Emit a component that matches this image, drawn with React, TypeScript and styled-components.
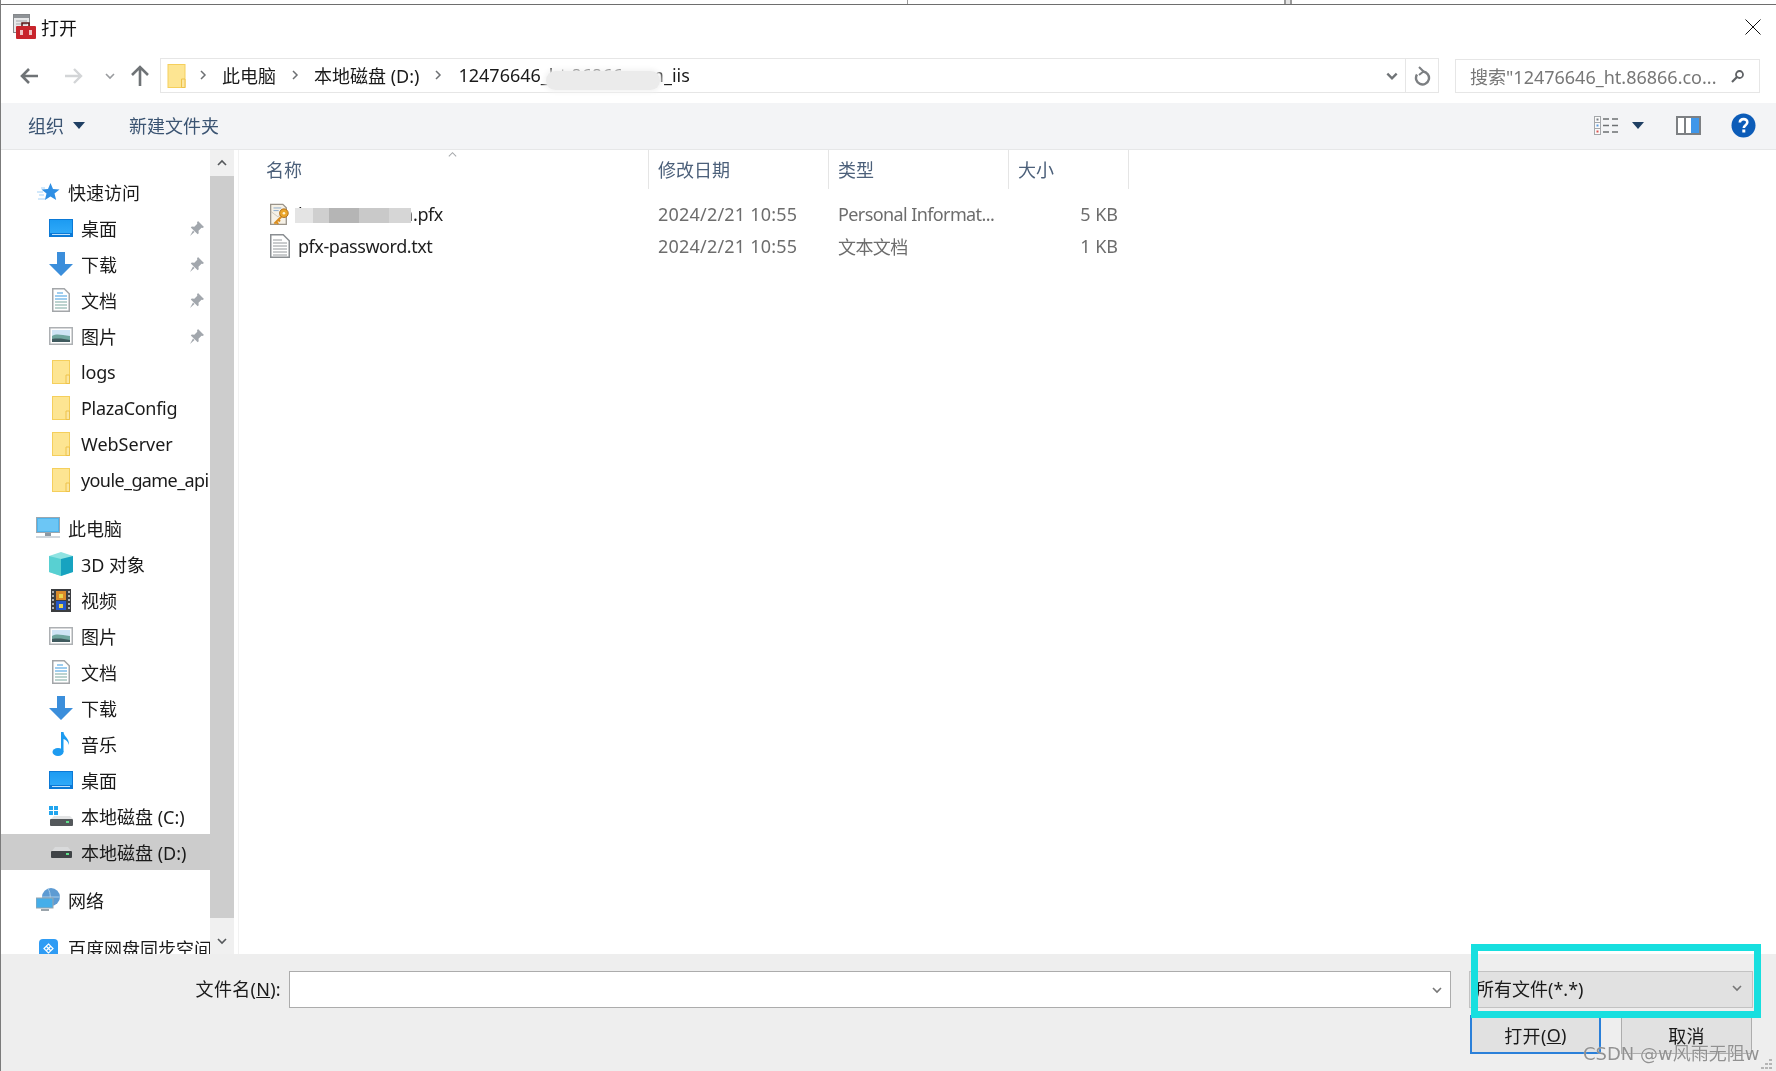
import React from 'react'
import styled, { createGlobalStyle } from 'styled-components'

const GlobalStyle = createGlobalStyle`
  html, body {
    margin: 0;
    padding: 0;
    background: #fff;
  }
  * { box-sizing: border-box; }
`

const Back = ({ color = '#6f7376' }: { color?: string }) => (
  <svg width="20" height="20" viewBox="0 0 20 20" fill="none" stroke={color} strokeWidth="2.6">
    <path d="M19 10H3M10 3l-7 7 7 7" />
  </svg>
)
const Forward = () => (
  <svg width="20" height="20" viewBox="0 0 20 20" fill="none" stroke="#d3d5d7" strokeWidth="2.4">
    <path d="M1 10h16M10 3l7 7-7 7" />
  </svg>
)
const Up = () => (
  <svg width="20" height="22" viewBox="0 0 20 22" fill="none" stroke="#6f7376" strokeWidth="2.6">
    <path d="M10 21V3M2 10l8-8 8 8" />
  </svg>
)
const Chevron = ({ size = 12, color = '#8a8d90', width = 1.6 }: { size?: number; color?: string; width?: number }) => (
  <svg width={size} height={size} viewBox="0 0 12 12" fill="none" stroke={color} strokeWidth={width}>
    <path d="M2 4l4 4 4-4" />
  </svg>
)
const Crumb = () => (
  <svg width="8" height="12" viewBox="0 0 8 12" fill="none" stroke="#6d7073" strokeWidth="1.5">
    <path d="M2 2l4 4-4 4" />
  </svg>
)
const Caret = ({ color = '#1f3f63' }: { color?: string }) => (
  <svg width="12" height="7" viewBox="0 0 12 7"><path d="M0 0h12L6 7z" fill={color} /></svg>
)
const Refresh = () => (
  <svg width="18" height="20" viewBox="0 0 18 20" fill="none" stroke="#7c7f82" strokeWidth="2.4">
    <path d="M10 5.500a6.500 6.500 0 1 1-6 3" />
    <path d="M6 1l4.500 4.500L6 9" strokeWidth="2" />
  </svg>
)
const Lens = () => (
  <svg width="14" height="14" viewBox="0 0 14 14" fill="none" stroke="#5f6265">
    <circle cx="8.500" cy="5.500" r="3.500" strokeWidth="1.800" />
    <path d="M6 8l-5 5" strokeWidth="2.200" />
  </svg>
)
const CloseX = () => (
  <svg width="16" height="16" viewBox="0 0 16 16" stroke="#111" strokeWidth="1" fill="none">
    <path d="M.5.5l15 15M15.500.5l-15 15" />
  </svg>
)
const ViewIcon = () => (
  <svg width="25" height="19" viewBox="0 0 25 19">
    <rect x=".5" y=".5" width="6" height="18" fill="#fafafa" stroke="#a4a7aa" />
    <path d="M.5 6.500h6M.5 12.500h6" stroke="#a4a7aa" />
    <rect x="2.500" y="2.500" width="2" height="2" fill="#7a7f85" />
    <rect x="2.500" y="8.500" width="2" height="2" fill="#5d9ce0" />
    <rect x="2.500" y="14.500" width="2" height="2" fill="#d9534f" />
    <path d="M9 3h6M18 3h6M9 9.500h6M18 9.500h6M9 16h6M18 16h6" stroke="#6d7073" strokeWidth="1.500" />
  </svg>
)
const PaneIcon = () => (
  <svg width="25" height="19" viewBox="0 0 25 19">
    <rect x="1" y="1" width="23" height="17" fill="#fff" stroke="#7d8083" strokeWidth="2" />
    <rect x="8" y="1" width="2" height="17" fill="#7d8083" />
    <rect x="15" y="2" width="8" height="15" fill="#3f97ea" />
  </svg>
)
const Help = () => (
  <svg width="25" height="25" viewBox="0 0 25 25">
    <circle cx="12.500" cy="12.500" r="12" fill="#0c5cb8" />
    <path d="M8.800 9.500c.3-4.500 7.500-4.500 7.500-.2 0 3-3.500 2.800-3.500 5.700" fill="none" stroke="#fff" strokeWidth="2.600" />
    <rect x="11.300" y="16.500" width="3" height="3" fill="#fff" />
  </svg>
)
const Folder = ({ w = 18, h = 24 }: { w?: number; h?: number }) => (
  <svg width={w} height={h} viewBox="0 0 18 24">
    <rect x=".5" y=".5" width="17" height="23" fill="#fde592" stroke="#f5cf5c" />
    <path d="M14 23.500V15h3.500v8.500z" fill="#fbe6a0" stroke="#eec24a" />
  </svg>
)
const Desktop = () => (
  <svg width="24" height="18" viewBox="0 0 24 18">
    <defs>
      <linearGradient id="desk" x1="0" y1="0" x2="0" y2="1">
        <stop offset="0" stopColor="#1c9bf2" />
        <stop offset="1" stopColor="#2fa9f8" />
      </linearGradient>
    </defs>
    <rect width="24" height="18" fill="#0b79d6" />
    <rect x="1" y="1" width="22" height="13" fill="url(#desk)" />
    <rect x="3" y="15" width="18" height="1" fill="#bfe1fa" />
  </svg>
)
const Download = () => (
  <svg width="24" height="24" viewBox="0 0 24 24"><path d="M8 0h8v12h8L12 24 0 12h8z" fill="#3b8edb" /></svg>
)
const Doc = () => (
  <svg width="18" height="24" viewBox="0 0 18 24">
    <path d="M.75.75h11.500l5 5v17.500H.750z" fill="#fff" stroke="#a3a6a9" strokeWidth="1.500" />
    <path d="M5 5h6M3 8h12M3 11h12" stroke="#3e9be0" strokeWidth="1.200" />
    <path d="M3 14h12M3 17h12M3 20h12" stroke="#7aa7a0" strokeWidth="1.200" />
  </svg>
)
const Picture = () => (
  <svg width="24" height="18" viewBox="0 0 24 18">
    <rect x=".75" y=".75" width="22.500" height="16.500" fill="#fff" stroke="#adb0b3" strokeWidth="1.500" />
    <rect x="3" y="3" width="18" height="6" fill="#cfe4f5" />
    <path d="M3 9c5-3 9-1 18 0v6H3z" fill="#6fa59e" />
    <path d="M3 12c7-1 12 0 18 1v2H3z" fill="#3f5a5e" />
  </svg>
)
const Star = () => (
  <svg width="24" height="20" viewBox="0 0 24 20">
    <path d="M14.500 1l2.500 6 6.500.4-5 4.200 1.700 6.400-5.700-3.500-5.600 3.500 1.600-6.400-5-4.200 6.500-.4z" fill="#2f8fe4" />
    <path d="M1 10h6M3 13h5M5 6h4M2 17h7" stroke="#a3d2f7" strokeWidth="1.200" />
  </svg>
)
const Pin = () => (
  <svg width="15" height="15" viewBox="0 0 15 15">
    <path d="M9 0l6 6-1.500 1-1-.3-3 3 .2 2.600-1 1L1.800 6.500l1-1 2.500.3 3-3L8 1.500zM4 9.500l1.500 1.500L1 15z" fill="#a2a7ad" />
  </svg>
)
const Computer = () => (
  <svg width="24" height="22" viewBox="0 0 24 22">
    <rect x=".5" y=".5" width="23" height="15" fill="#4db5ee" stroke="#9aa7b0" />
    <rect x="2" y="2" width="20" height="12" fill="#6cc6f5" />
    <rect x="9" y="16" width="6" height="3" fill="#8d99a3" />
    <rect y="19" width="24" height="2" fill="#cfd6dc" />
  </svg>
)
const Cube = () => (
  <svg width="24" height="24" viewBox="0 0 24 24">
    <path d="M12 0l12 4v16l-12 4L0 20V4z" fill="#8fe3e2" />
    <path d="M12 7l12-3v16l-12 4z" fill="#17a3c0" />
    <path d="M0 4l12 3v17L0 20z" fill="#58d0d2" />
  </svg>
)
const Film = () => (
  <svg width="20" height="23" viewBox="0 0 20 23">
    <rect width="20" height="23" fill="#3b3d40" />
    <path d="M2 2v19M18 2v19" stroke="#cfd2d5" strokeWidth="1.600" strokeDasharray="2 2" />
    <rect x="5" y="2" width="10" height="9" fill="#d98b2b" />
    <rect x="5" y="12" width="10" height="9" fill="#2458c9" />
    <path d="M8 5h4v4H8zM8 15h4v4H8z" fill="#e9d44c" />
  </svg>
)
const Note = () => (
  <svg width="18" height="24" viewBox="0 0 18 24">
    <ellipse cx="6" cy="20" rx="5.500" ry="4" fill="#1d9bf0" />
    <path d="M9 0h2.500c.5 5 6 6 5.500 13-1-3-3-5.500-5.500-6V20H9z" fill="#1d9bf0" />
  </svg>
)
const DriveC = () => (
  <svg width="24" height="21" viewBox="0 0 24 21">
    <path d="M0 0h4v4H0zM5 0h4v4H5zM0 5h4v4H0zM5 5h4v4H5z" fill="#22a5ee" />
    <path d="M2 13l3-3h16l3 3z" fill="#e3e4e5" />
    <rect x="1" y="13" width="23" height="7" rx="1" fill="#54585b" />
    <rect x="17" y="15" width="3" height="2" fill="#5fe08a" />
  </svg>
)
const DriveD = () => (
  <svg width="21" height="13" viewBox="0 0 21 13">
    <path d="M1 5l3-4h13l3 4z" fill="#d9dadb" />
    <rect y="5" width="21" height="7" rx="1" fill="#3f4346" />
    <rect x="15" y="7" width="3" height="2" fill="#5fe08a" />
  </svg>
)
const Network = () => (
  <svg width="24" height="24" viewBox="0 0 24 24">
    <circle cx="15" cy="9" r="9" fill="#5d9bd3" />
    <path d="M12 1c3 3 3 13 0 16M6 9h18" stroke="#a9cdea" fill="none" />
    <rect y="10" width="17" height="10" fill="#45aee9" stroke="#97a4ad" />
    <rect x="5" y="21" width="8" height="2" fill="#9aa4ab" />
  </svg>
)
const Baidu = () => (
  <svg width="19" height="19" viewBox="0 0 19 19">
    <rect width="19" height="19" rx="4" fill="#2f9cf4" />
    <path d="M9.500 5l2.200 2.200-2.200 2.300-2.200-2.300zM5 9.500l2.200-2.200 2.300 2.200-2.300 2.200zM9.500 14l-2.200-2.200 2.200-2.300 2.200 2.300zM14 9.500l-2.200 2.200-2.300-2.200 2.300-2.200z" fill="none" stroke="#fff" strokeWidth="1.200" />
  </svg>
)
const AppIcon = () => (
  <svg width="23" height="26" viewBox="0 0 23 26">
    <rect x=".5" y=".5" width="16" height="18" fill="#e8e9ea" stroke="#85888b" />
    <rect x="1" y="1" width="15" height="3" fill="#8f9397" />
    <path d="M3 7h11M3 10h11" stroke="#a5a8ab" />
    <path d="M9 12V9h7v3" fill="none" stroke="#5b1414" strokeWidth="1.500" />
    <rect x="3" y="12" width="20" height="13" rx="1" fill="#c8252c" />
    <rect x="7" y="16" width="3" height="5" fill="#f0c4c4" />
    <rect x="16" y="16" width="3" height="5" fill="#f0c4c4" />
  </svg>
)
const CertIcon = () => (
  <svg width="23" height="25" viewBox="0 0 23 25">
    <path d="M.75.75h14l4 4v19H.750z" fill="#f6f1e6" stroke="#9a948a" strokeWidth="1.500" />
    <path d="M4 5h9M4 8h6" stroke="#7ea3c9" />
    <path d="M1 9l8 6 10-6" fill="none" stroke="#c9c3b5" />
    <circle cx="16" cy="11" r="5" fill="#eaa52a" stroke="#a8681a" />
    <circle cx="16" cy="11" r="1.500" fill="#fff3d0" />
    <path d="M13 15L5 23M7 21l2.500 2.500M9.500 18.500l2 2" stroke="#d98d1f" strokeWidth="2.400" fill="none" />
  </svg>
)
const TextIcon = () => (
  <svg width="20" height="24" viewBox="0 0 20 24">
    <path d="M.75.75h12.500l6 6v16.500H.750z" fill="#fff" stroke="#8a8e92" strokeWidth="1.500" />
    <path d="M3 6h9M3 9h14M3 12h14M3 15h14M3 18h14M3 21h14" stroke="#94989c" />
  </svg>
)
const Grip = () => (
  <svg width="11" height="11" viewBox="0 0 11 11" fill="#b5b5b5">
    <path d="M8 0h3v2H8zM4 4h3v2H4zM8 4h3v2H8zM0 8h3v2H0zM4 8h3v2H4zM8 8h3v2H8z" />
  </svg>
)

type NavItem = {
  icon: React.ReactNode
  label: string
  root?: boolean
  pin?: boolean
  selected?: boolean
  spaced?: boolean
  tracking?: number
}

const navItems: NavItem[] = [
  { icon: <Star />, label: '快速访问', root: true },
  { icon: <Desktop />, label: '桌面', pin: true },
  { icon: <Download />, label: '下载', pin: true },
  { icon: <Doc />, label: '文档', pin: true },
  { icon: <Picture />, label: '图片', pin: true },
  { icon: <Folder />, label: 'logs', tracking: -0.2 },
  { icon: <Folder />, label: 'PlazaConfig', tracking: -0.3 },
  { icon: <Folder />, label: 'WebServer' },
  { icon: <Folder />, label: 'youle_game_api', tracking: -0.6 },
  { icon: <Computer />, label: '此电脑', root: true, spaced: true },
  { icon: <Cube />, label: '3D 对象' },
  { icon: <Film />, label: '视频' },
  { icon: <Picture />, label: '图片' },
  { icon: <Doc />, label: '文档' },
  { icon: <Download />, label: '下载' },
  { icon: <Note />, label: '音乐' },
  { icon: <Desktop />, label: '桌面' },
  { icon: <DriveC />, label: '本地磁盘 (C:)' },
  { icon: <DriveD />, label: '本地磁盘 (D:)', selected: true },
  { icon: <Network />, label: '网络', root: true, spaced: true },
  { icon: <Baidu />, label: '百度网盘同步空间', root: true, spaced: true },
]

const columns = [
  { label: '名称', width: 383 },
  { label: '修改日期', width: 180 },
  { label: '类型', width: 180 },
  { label: '大小', width: 120 },
]

export default function App() {
  return (
    <Dialog>
      <GlobalStyle />
      <TopEdge>
        <Tick />
        <Handle />
      </TopEdge>
      <TitleBar>
        <TitleLeft>
          <AppIcon />
          <span>打开</span>
        </TitleLeft>
        <CloseX />
      </TitleBar>
      <NavBar>
        <NavButton $gap={25}><Back /></NavButton>
        <NavButton $gap={20}><Forward /></NavButton>
        <NavButton $gap={14}><Chevron color="#9a9c9f" /></NavButton>
        <NavButton $gap={10}><Up /></NavButton>
        <Address>
          <Folder w={19} h={24} />
          <Crumbs>
            <Crumb />
            <span>此电脑</span>
            <Crumb />
            <span>本地磁盘 (D:)</span>
            <Crumb />
            <CrumbPath>
              12476646_ht.86866.com_iis
              <PathSmudge />
            </CrumbPath>
          </Crumbs>
          <AddressEnd>
            <Chevron size={14} color="#6f7376" width={2} />
            <RefreshCell><Refresh /></RefreshCell>
          </AddressEnd>
        </Address>
        <Search>
          <SearchText>搜索"12476646_ht.86866.co...</SearchText>
          <Lens />
        </Search>
      </NavBar>
      <Toolbar>
        <ToolGroup>
          <ToolText>组织</ToolText>
          <Caret />
          <ToolText $offset={35}>新建文件夹</ToolText>
        </ToolGroup>
        <ToolGroup>
          <ViewIcon />
          <CaretSlot><Caret /></CaretSlot>
          <PaneSlot><PaneIcon /></PaneSlot>
          <HelpSlot><Help /></HelpSlot>
        </ToolGroup>
      </Toolbar>
      <Main>
        <NavPane>
          <NavList>
            {navItems.map((item) => (
              <NavRow key={item.label + item.root + item.pin} $root={item.root} $selected={item.selected} $spaced={item.spaced}>
                <NavIcon>{item.icon}</NavIcon>
                <NavLabel $tracking={item.tracking}>{item.label}</NavLabel>
                {item.pin && <PinSlot><Pin /></PinSlot>}
              </NavRow>
            ))}
          </NavList>
          <ScrollBar>
            <ScrollArrow><UpChevron><Chevron color="#55585b" /></UpChevron></ScrollArrow>
            <ScrollThumb />
            <ScrollArrow><Chevron color="#55585b" /></ScrollArrow>
          </ScrollBar>
        </NavPane>
        <FilePane>
          <SortMark><UpChevron><Chevron color="#a6a9ac" size={11} width={1.1} /></UpChevron></SortMark>
          <HeaderRow>
            {columns.map((c) => (
              <HeaderCell key={c.label} $width={c.width}>{c.label}</HeaderCell>
            ))}
          </HeaderRow>
          <FileRow>
            <NameCell>
              <FileIcon><CertIcon /></FileIcon>
              <FileName>
                <HiddenPart>ht.86866.com</HiddenPart>.pfx
                <NameSmudge>
                  <SmudgeBlock $c="#e4e4e4" $w={18} />
                  <SmudgeBlock $c="#cfcfcf" $w={16} />
                  <SmudgeBlock $c="#b5b5b5" $w={30} />
                  <SmudgeBlock $c="#c9c9c9" $w={30} />
                  <SmudgeBlock $c="#d6d6d6" $w={22} />
                </NameSmudge>
              </FileName>
            </NameCell>
            <DateCell>2024/2/21 10:55</DateCell>
            <TypeCell>Personal Informat...</TypeCell>
            <SizeCell>5 KB</SizeCell>
          </FileRow>
          <FileRow>
            <NameCell>
              <FileIcon><TextIcon /></FileIcon>
              <FileName>pfx-password.txt</FileName>
            </NameCell>
            <DateCell>2024/2/21 10:55</DateCell>
            <TypeCell>文本文档</TypeCell>
            <SizeCell>1 KB</SizeCell>
          </FileRow>
        </FilePane>
      </Main>
      <Footer>
        <FieldRow>
          <FieldLabel>文件名(<u>N</u>):</FieldLabel>
          <NameInput><Chevron color="#777" /></NameInput>
          <FilterBox>
            <span>所有文件(*.*)</span>
            <Chevron color="#777" />
          </FilterBox>
        </FieldRow>
        <ButtonRow>
          <DialogButton>打开(<u>O</u>)</DialogButton>
          <DialogButton $quiet>取消</DialogButton>
        </ButtonRow>
        <Highlight />
        <Watermark>CSDN @w风雨无阻w</Watermark>
        <GripSlot><Grip /></GripSlot>
      </Footer>
    </Dialog>
  )
}

const Dialog = styled.div`
  width: 1776px;
  height: 1071px;
  display: flex;
  flex-direction: column;
  overflow: hidden;
  background: #fff;
  border-left: 1px solid #7b7b7b;
  font-family: 'Noto Sans', 'Noto Sans CJK SC', sans-serif;
  font-size: 18px;
  color: #1a1a1a;
  filter: blur(0.35px);
`

const TopEdge = styled.div`
  position: relative;
  height: 5px;
  flex: none;
  border-bottom: 1px solid #6e6e6e;
`

const Tick = styled.div`
  position: absolute;
  left: 906px;
  top: 0;
  width: 1px;
  height: 4px;
  background: #9a9a9a;
`

const Handle = styled.div`
  position: absolute;
  left: 1283px;
  top: 0;
  width: 8px;
  height: 4px;
  border: 1px solid #9a9a9a;
  border-width: 0 2px;
  background: #e4e4e4;
`

const TitleBar = styled.div`
  height: 47px;
  flex: none;
  display: flex;
  align-items: center;
  justify-content: space-between;
  padding: 0 15px 3px 12px;
`

const TitleLeft = styled.div`
  display: flex;
  align-items: center;
  gap: 5px;
  color: #111;
`

const NavBar = styled.div`
  height: 51px;
  flex: none;
  display: flex;
  align-items: flex-start;
  padding: 6px 16px 0 18px;
`

const NavButton = styled.div<{ $gap: number }>`
  height: 35px;
  display: flex;
  align-items: center;
  margin-right: ${(p) => p.$gap}px;
`

const Address = styled.div`
  flex: 1;
  height: 35px;
  display: flex;
  align-items: center;
  padding-left: 6px;
  border: 1px solid #e6e6e6;
`

const Crumbs = styled.div`
  display: flex;
  align-items: center;
  flex: 1;
  margin-left: 13px;
  padding-bottom: 2px;

  span { margin: 0 15px; }
`

const CrumbPath = styled.div`
  position: relative;
  margin-left: 16px;
`

const PathSmudge = styled.div`
  position: absolute;
  left: 88px;
  top: 8px;
  width: 114px;
  height: 19px;
  background: #ebebeb;
  border-radius: 10px;
  box-shadow: 0 0 5px 2px #f3f3f3;
`

const AddressEnd = styled.div`
  display: flex;
  align-items: center;
  height: 100%;
  gap: 6px;
`

const RefreshCell = styled.div`
  width: 33px;
  height: 100%;
  display: flex;
  align-items: center;
  justify-content: center;
  border-left: 1px solid #e6e6e6;
`

const Search = styled.div`
  width: 305px;
  height: 34px;
  margin: 1px 0 0 16px;
  padding: 0 14px;
  display: flex;
  align-items: center;
  justify-content: space-between;
  border: 1px solid #e6e6e6;
`

const SearchText = styled.span`
  color: #777;
`

const Toolbar = styled.div`
  height: 47px;
  flex: none;
  display: flex;
  align-items: center;
  justify-content: space-between;
  padding: 0 20px 2px 27px;
  background: #f3f4f6;
  border-bottom: 1px solid #e6e7e8;
`

const ToolGroup = styled.div`
  display: flex;
  align-items: center;
  gap: 9px;
`

const ToolText = styled.span<{ $offset?: number }>`
  color: #3b5472;
  margin-left: ${(p) => p.$offset ?? 0}px;
`

const CaretSlot = styled.div`
  display: flex;
  margin-left: 4px;
`

const PaneSlot = styled.div`
  display: flex;
  margin-left: 23px;
`

const HelpSlot = styled.div`
  display: flex;
  margin-left: 21px;
`

const Main = styled.div`
  flex: 1;
  display: flex;
  min-height: 0;
`

const NavPane = styled.div`
  width: 233px;
  flex: none;
  display: flex;
`

const NavList = styled.div`
  width: 209px;
  padding-top: 24px;
  overflow: hidden;
`

const NavRow = styled.div<{ $root?: boolean; $selected?: boolean; $spaced?: boolean }>`
  height: 36px;
  display: flex;
  align-items: center;
  gap: 8px;
  white-space: nowrap;
  padding-left: ${(p) => (p.$root ? 35 : 48)}px;
  margin-top: ${(p) => (p.$spaced ? 12 : 0)}px;
  background: ${(p) => (p.$selected ? '#cccccc' : 'transparent')};
`

const NavIcon = styled.div`
  width: 24px;
  height: 24px;
  flex: none;
  display: flex;
  align-items: center;
  justify-content: center;
`

const NavLabel = styled.span<{ $tracking?: number }>`
  flex: none;
  letter-spacing: ${(p) => p.$tracking ?? 0}px;
`

const PinSlot = styled.div`
  display: flex;
  margin-left: auto;
  margin-right: 6px;
`

const ScrollBar = styled.div`
  width: 24px;
  display: flex;
  flex-direction: column;
  background: #f0f0f0;
`

const ScrollArrow = styled.div`
  height: 26px;
  flex: none;
  display: flex;
  align-items: center;
  justify-content: center;
`

const UpChevron = styled.div`
  display: flex;
  transform: rotate(180deg);
`

const ScrollThumb = styled.div`
  flex: 1;
  background: #cdcdcd;
  margin-bottom: 10px;
`

const FilePane = styled.div`
  position: relative;
  flex: 1;
  margin-left: 4px;
  border-left: 1px solid #f2f2f2;
`

const SortMark = styled.div`
  position: absolute;
  left: 208px;
  top: -1px;
`

const HeaderRow = styled.div`
  height: 39px;
  display: flex;
  padding-left: 27px;
  margin-bottom: 9px;
`

const HeaderCell = styled.div<{ $width: number }>`
  width: ${(p) => p.$width}px;
  padding-top: 6px;
  color: #4c607a;
  border-right: 1px solid #e5e5e5;

  & + & { padding-left: 9px; }
`

const FileRow = styled.div`
  height: 32px;
  display: flex;
  align-items: center;
  white-space: nowrap;
`

const NameCell = styled.div`
  width: 419px;
  display: flex;
  align-items: center;
  padding-left: 31px;
  gap: 8px;
  color: #1e1e1e;
`

const FileIcon = styled.div`
  width: 20px;
  display: flex;
  justify-content: center;
`

const FileName = styled.span`
  position: relative;
  letter-spacing: -0.45px;
`

const HiddenPart = styled.span`
  letter-spacing: 0;
`

const NameSmudge = styled.div`
  position: absolute;
  left: -3px;
  top: 6px;
  height: 15px;
  display: flex;
`

const SmudgeBlock = styled.div<{ $c: string; $w: number }>`
  width: ${(p) => p.$w}px;
  background: ${(p) => p.$c};
`

const DateCell = styled.div`
  width: 180px;
  color: #6d6d6d;
  letter-spacing: 0.2px;
`

const TypeCell = styled.div`
  width: 180px;
  color: #6d6d6d;
  letter-spacing: -0.6px;
`

const SizeCell = styled.div`
  width: 100px;
  text-align: right;
  color: #6d6d6d;
`

const Footer = styled.div`
  position: relative;
  height: 117px;
  flex: none;
  padding-top: 17px;
  background: #eeeeee;
`

const FieldRow = styled.div`
  display: grid;
  grid-template-columns: 280px 1162px 284px;
  height: 37px;

  & > *:nth-child(2) { margin-left: 8px; width: 1162px; }
  & > *:nth-child(3) { margin-left: 26px; width: 284px; }
`

const FieldLabel = styled.label`
  align-self: center;
  justify-self: end;
  margin-bottom: 3px;
  letter-spacing: 0.3px;
`

const NameInput = styled.div`
  display: flex;
  align-items: center;
  justify-content: flex-end;
  padding-right: 7px;
  background: #fff;
  border: 1px solid #acacac;
`

const FilterBox = styled.div`
  display: flex;
  align-items: center;
  justify-content: space-between;
  padding: 0 9px 3px 6px;
  background: #e1e1e1;
  border: 1px solid #c2c2c2;
`

const ButtonRow = styled.div`
  display: flex;
  justify-content: flex-end;
  gap: 20px;
  margin-top: 7px;
  padding-right: 24px;
`

const DialogButton = styled.div<{ $quiet?: boolean }>`
  width: 131px;
  height: 39px;
  display: flex;
  align-items: center;
  justify-content: center;
  letter-spacing: 0.3px;
  background: #e1e1e1;
  border: ${(p) => (p.$quiet ? '1px solid #adadad' : '2px solid #2b80d9')};
`

const Highlight = styled.div`
  position: absolute;
  left: 1470px;
  top: -10px;
  width: 290px;
  height: 74px;
  border: 7px solid #17dfdf;
`

const Watermark = styled.div`
  position: absolute;
  left: 1582px;
  top: 85px;
  white-space: nowrap;
  font-family: 'DejaVu Sans', 'Noto Sans CJK SC', sans-serif;
  font-size: 18px;
  color: rgba(100, 100, 100, 0.7);
  text-shadow: 0 0 1px #fff;
`

const GripSlot = styled.div`
  position: absolute;
  right: 4px;
  bottom: 1px;
  display: flex;
`
